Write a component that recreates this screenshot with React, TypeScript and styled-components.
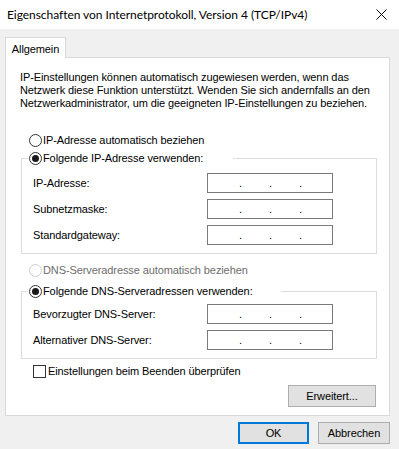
import React from "react";
import styled, { createGlobalStyle } from "styled-components";

const GlobalStyle = createGlobalStyle`
  html, body { margin: 0; padding: 0; }
  body {
    background: #f0f0f0;
    font-family: "Liberation Sans", Arial, sans-serif;
    font-size: 11px;
    letter-spacing: -0.1px;
    color: #000;
  }
  * { box-sizing: border-box; }
`;

const Window = styled.div`
  width: 399px;
  height: 449px;
  display: flex;
  flex-direction: column;
  background: #f0f0f0;
  overflow: hidden;
`;

const TitleBar = styled.div`
  height: 29px;
  flex: none;
  background: #fff;
  display: flex;
  align-items: center;
  justify-content: space-between;
  padding-left: 7px;
`;

const TitleText = styled.div`
  font-family: "Lato", "Liberation Sans", sans-serif;
  font-size: 12px;
  letter-spacing: -0.05px;
  line-height: 16px;
  margin-top: 0px;
  white-space: nowrap;
`;

const CloseButton = styled.div`
  width: 36px;
  height: 29px;
  display: flex;
  align-items: center;
  justify-content: center;
`;

const Body = styled.div`
  flex: 1;
  display: flex;
  flex-direction: column;
  padding: 8px 9px 0 5px;
`;

const TabStrip = styled.div`
  display: flex;
  margin-bottom: -1px;
  position: relative;
  z-index: 1;
`;

const Tab = styled.div`
  width: 61px;
  height: 21px;
  background: #fff;
  border: 1px solid #d9d9d9;
  border-bottom: none;
  display: flex;
  align-items: center;
  justify-content: center;
  padding-top: 1px;
`;

const Panel = styled.div`
  height: 359px;
  background: #fff;
  border: 1px solid #d9d9d9;
  display: flex;
  flex-direction: column;
  padding: 0 12px 8px 14px;
`;

const Intro = styled.p`
  margin: 13px 0 0 0;
  line-height: 13px;
`;

const OptionRow = styled.label<{ $top: number; $indent: number; $disabled?: boolean }>`
  display: flex;
  align-items: center;
  height: 13px;
  margin-top: ${(p) => p.$top}px;
  margin-left: ${(p) => p.$indent}px;
  line-height: 13px;
  white-space: nowrap;
  color: ${(p) => (p.$disabled ? "#6d6d6d" : "#000")};
`;

const RadioCircle = styled.span<{ $checked?: boolean; $disabled?: boolean }>`
  width: 13px;
  height: 13px;
  flex: none;
  border-radius: 50%;
  border: 1px solid ${(p) => (p.$disabled ? "#cccccc" : "#333333")};
  background: #fff;
  display: flex;
  align-items: center;
  justify-content: center;
  margin-right: 1px;
  &::after {
    content: "";
    display: ${(p) => (p.$checked ? "block" : "none")};
    width: 7px;
    height: 7px;
    border-radius: 50%;
    background: #1a1a1a;
  }
`;

const CheckBox = styled.span`
  width: 13px;
  height: 13px;
  flex: none;
  border: 1px solid #333333;
  background: #fff;
  margin-right: 2px;
`;

const Group = styled.fieldset<{ $top: number }>`
  margin: ${(p) => p.$top}px 0 0 1px;
  padding: 0;
  border: 1px solid #dcdcdc;
  min-width: 0;
`;

const Legend = styled.legend<{ $width: number }>`
  width: ${(p) => p.$width}px;
  height: 13px;
  margin-left: 6px;
  padding: 0 0 0 1px;
  display: flex;
  align-items: center;
  line-height: 13px;
  white-space: nowrap;
  background: #fff;
`;

const FieldGrid = styled.div<{ $top: number }>`
  display: grid;
  grid-template-columns: 174px 126px;
  grid-auto-rows: 20px;
  row-gap: 6px;
  align-items: center;
  padding: ${(p) => p.$top}px 0 8px 11px;
`;

const FieldLabel = styled.span`
  line-height: 13px;
  white-space: nowrap;
`;

const IpBox = styled.div`
  width: 126px;
  height: 20px;
  border: 1px solid #7a7a7a;
  background: #fff;
  display: flex;
  padding-left: 3px;
  line-height: 18px;
`;

const Seg = styled.span<{ $w: number }>`
  width: ${(p) => p.$w}px;
  flex: none;
`;

const Dot = styled.span`
  width: 3px;
  flex: none;
  overflow: visible;
  color: #000;
`;

const ButtonRow = styled.div<{ $top: number }>`
  display: flex;
  justify-content: flex-end;
  gap: 9px;
  margin-top: ${(p) => p.$top}px;
`;

const Button = styled.button<{ $width: number; $default?: boolean }>`
  width: ${(p) => p.$width}px;
  height: 22px;
  padding: 0;
  margin: 0;
  background: #e1e1e1;
  border: ${(p) => (p.$default ? "2px solid #0078d7" : "1px solid #adadad")};
  font-family: "Liberation Sans", Arial, sans-serif;
  font-size: 11px;
  letter-spacing: -0.1px;
  color: #000;
  line-height: 13px;
  display: flex;
  align-items: center;
  justify-content: center;
`;

const PanelButtons = styled(ButtonRow)`
  margin-right: 1px;
`;

const Footer = styled(ButtonRow)`
  margin-top: 6px;
`;

function IpField() {
  return (
    <IpBox>
      <Seg $w={28} />
      <Dot>.</Dot>
      <Seg $w={27} />
      <Dot>.</Dot>
      <Seg $w={27} />
      <Dot>.</Dot>
      <Seg $w={20} />
    </IpBox>
  );
}

export default function App() {
  return (
    <Window>
      <GlobalStyle />
      <TitleBar>
        <TitleText>Eigenschaften von Internetprotokoll, Version 4 (TCP/IPv4)</TitleText>
        <CloseButton>
          <svg width="11" height="11" viewBox="0 0 11 11">
            <path d="M0.5 0.5 L10.5 10.5 M10.5 0.5 L0.5 10.5" stroke="#000" strokeWidth="1" fill="none" />
          </svg>
        </CloseButton>
      </TitleBar>
      <Body>
        <TabStrip>
          <Tab>Allgemein</Tab>
        </TabStrip>
        <Panel>
          <Intro>
            IP-Einstellungen können automatisch zugewiesen werden, wenn das
            <br />
            Netzwerk diese Funktion unterstützt. Wenden Sie sich andernfalls an den
            <br />
            Netzwerkadministrator, um die geeigneten IP-Einstellungen zu beziehen.
          </Intro>

          <OptionRow $top={24} $indent={9}>
            <RadioCircle />
            IP-Adresse automatisch beziehen
          </OptionRow>

          <Group $top={5}>
            <Legend $width={205}>
              <RadioCircle $checked />
              Folgende IP-Adresse verwenden:
            </Legend>
            <FieldGrid $top={8}>
              <FieldLabel>IP-Adresse:</FieldLabel>
              <IpField />
              <FieldLabel>Subnetzmaske:</FieldLabel>
              <IpField />
              <FieldLabel>Standardgateway:</FieldLabel>
              <IpField />
            </FieldGrid>
          </Group>

          <OptionRow $top={10} $indent={9} $disabled>
            <RadioCircle $disabled />
            DNS-Serveradresse automatisch beziehen
          </OptionRow>

          <Group $top={8}>
            <Legend $width={253}>
              <RadioCircle $checked />
              Folgende DNS-Serveradressen verwenden:
            </Legend>
            <FieldGrid $top={6}>
              <FieldLabel>Bevorzugter DNS-Server:</FieldLabel>
              <IpField />
              <FieldLabel>Alternativer DNS-Server:</FieldLabel>
              <IpField />
            </FieldGrid>
          </Group>

          <OptionRow $top={6} $indent={13}>
            <CheckBox />
            Einstellungen beim Beenden überprüfen
          </OptionRow>

          <PanelButtons $top={7}>
            <Button $width={88}>Erweitert...</Button>
          </PanelButtons>
        </Panel>
        <Footer $top={6}>
          <Button $width={71} $default>OK</Button>
          <Button $width={72}>Abbrechen</Button>
        </Footer>
      </Body>
    </Window>
  );
}
